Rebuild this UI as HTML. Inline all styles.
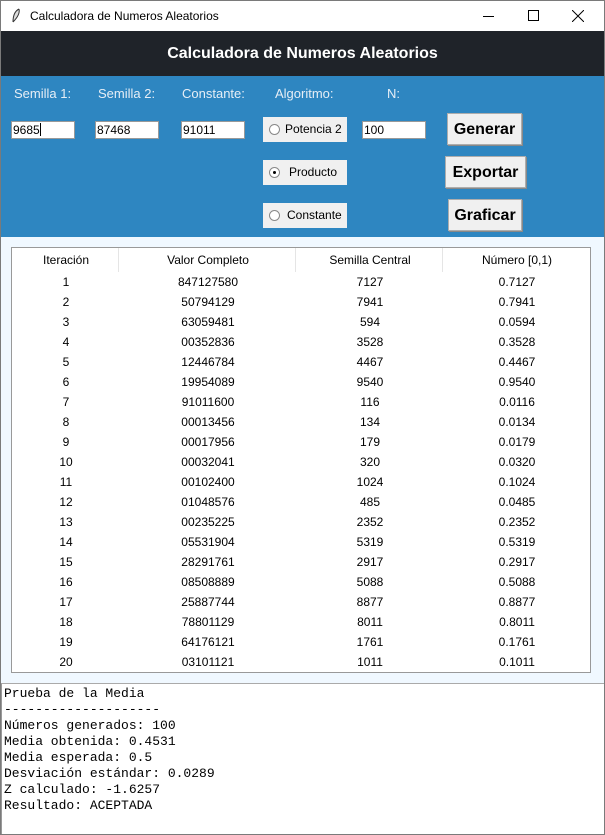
<!DOCTYPE html>
<html><head><meta charset="utf-8"><style>
*{margin:0;padding:0;box-sizing:border-box}
body{width:605px;height:835px;position:relative;background:#fff;font-family:"Liberation Sans",sans-serif;overflow:hidden}
.abs{position:absolute}
#tb{left:1px;top:1px;width:603px;height:30px;background:#fff;font-size:12px;color:#000}
#hdr{left:1px;top:31px;width:603px;height:45px;background:#1f2329;color:#fff;font-weight:bold;font-size:16px;text-align:center;line-height:45px}
#blue{left:1px;top:76px;width:603px;height:161px;background:#2e86c1}
.lbl{position:absolute;top:86px;color:#e6eef6;font-size:13px}
.inp{position:absolute;top:121px;height:18px;background:#fff;border:1px solid #999;font-size:12px;line-height:16px;padding-left:1px;color:#000}
.rad{position:absolute;left:263px;width:84px;height:25px;background:#f0f0f0;font-size:12px;line-height:25px;color:#000}
.rad i{position:absolute;left:6px;top:7px;width:11px;height:11px;border-radius:50%;border:1px solid #888;background:#fff}
.rad b{position:absolute;left:3px;top:3px;width:3px;height:3px;border-radius:50%;background:#000}
.btn{position:absolute;background:#f0f0f0;border:1px solid #adadad;box-shadow:1px 1px 0 #888;font-weight:bold;font-size:16px;text-align:center;color:#000}
#light{left:1px;top:237px;width:603px;height:446px;background:#f0f8ff}
#tbl{left:11px;top:247px;width:580px;height:426px;background:#fff;border:1px solid #999}
.row{position:absolute;left:0;width:578px;height:20px;font-size:12px;line-height:20px;color:#000}
.row span{position:absolute;width:160px;margin-left:-80px;text-align:center}
#txt{left:1px;top:683px;width:603px;height:151px;background:#fff;border-top:1px solid #aaa;border-left:1px solid #999;font-family:"Liberation Mono",monospace;font-size:13px;line-height:16px;padding:2px 0 0 2px;white-space:pre;color:#000}
</style></head><body>
<div id="tb" class="abs">
<svg class="abs" style="left:10px;top:7px" width="10" height="16" viewBox="0 0 10 16"><path d="M8 1 C4 3 2 8 2 14 M8 1 C9 5 6 10 2 14" stroke="#333" fill="#ddd" stroke-width="1"/></svg>
<span class="abs" style="left:29px;top:8px">Calculadora de Numeros Aleatorios</span>
<div class="abs" style="left:482px;top:15px;width:11px;height:1px;background:#000"></div>
<div class="abs" style="left:527px;top:9px;width:11px;height:11px;border:1px solid #000"></div>
<svg class="abs" style="left:571px;top:9px" width="12" height="12"><path d="M0 0L12 12M12 0L0 12" stroke="#000" stroke-width="1"/></svg>
</div>
<div id="hdr" class="abs">Calculadora de Numeros Aleatorios</div>
<div id="blue" class="abs"></div>
<div class="lbl" style="left:14px">Semilla 1:</div>
<div class="lbl" style="left:98px">Semilla 2:</div>
<div class="lbl" style="left:182px">Constante:</div>
<div class="lbl" style="left:275px">Algoritmo:</div>
<div class="lbl" style="left:387px">N:</div>
<div class="inp" style="left:11px;width:64px">9685<span style="display:inline-block;width:1px;height:13px;background:#000;vertical-align:-2px"></span></div>
<div class="inp" style="left:95px;width:64px">87468</div>
<div class="inp" style="left:181px;width:64px">91011</div>
<div class="inp" style="left:362px;width:64px">100</div>
<div class="rad" style="top:117px"><i></i><span style="position:absolute;left:22px">Potencia 2</span></div>
<div class="rad" style="top:160px"><i><b></b></i><span style="position:absolute;left:26px">Producto</span></div>
<div class="rad" style="top:203px"><i></i><span style="position:absolute;left:24px">Constante</span></div>
<div class="btn" style="left:447px;top:113px;width:75px;height:32px;line-height:32px">Generar</div>
<div class="btn" style="left:445px;top:156px;width:81px;height:32px;line-height:32px">Exportar</div>
<div class="btn" style="left:448px;top:199px;width:74px;height:32px;line-height:32px">Graficar</div>
<div id="light" class="abs"></div>
<div id="tbl" class="abs">
<div class="row" style="top:0;height:24px;line-height:24px"><span style="left:54px">Iteración</span><span style="left:196px">Valor Completo</span><span style="left:358px">Semilla Central</span><span style="left:505px">Número [0,1)</span></div>
<div class="abs" style="left:106px;top:0;width:1px;height:24px;background:#e5e5e5"></div>
<div class="abs" style="left:283px;top:0;width:1px;height:24px;background:#e5e5e5"></div>
<div class="abs" style="left:430px;top:0;width:1px;height:24px;background:#e5e5e5"></div>
<div id="rows"></div>
</div>
<div id="txt" class="abs">Prueba de la Media
--------------------
Números generados: 100
Media obtenida: 0.4531
Media esperada: 0.5
Desviación estándar: 0.0289
Z calculado: -1.6257
Resultado: ACEPTADA</div>
<div class="abs" style="left:0;top:0;width:605px;height:835px;border:1px solid #7a7a7a;pointer-events:none"></div>
<script>
var d=[["847127580","7127","0.7127"],["50794129","7941","0.7941"],["63059481","594","0.0594"],["00352836","3528","0.3528"],["12446784","4467","0.4467"],["19954089","9540","0.9540"],["91011600","116","0.0116"],["00013456","134","0.0134"],["00017956","179","0.0179"],["00032041","320","0.0320"],["00102400","1024","0.1024"],["01048576","485","0.0485"],["00235225","2352","0.2352"],["05531904","5319","0.5319"],["28291761","2917","0.2917"],["08508889","5088","0.5088"],["25887744","8877","0.8877"],["78801129","8011","0.8011"],["64176121","1761","0.1761"],["03101121","1011","0.1011"]];
var h="";d.forEach(function(r,i){h+='<div class="row" style="top:'+(24+i*20)+'px"><span style="left:54px">'+(i+1)+'</span><span style="left:196px">'+r[0]+'</span><span style="left:358px">'+r[1]+'</span><span style="left:505px">'+r[2]+'</span></div>';});
document.getElementById("rows").innerHTML=h;
</script>
</body></html>
